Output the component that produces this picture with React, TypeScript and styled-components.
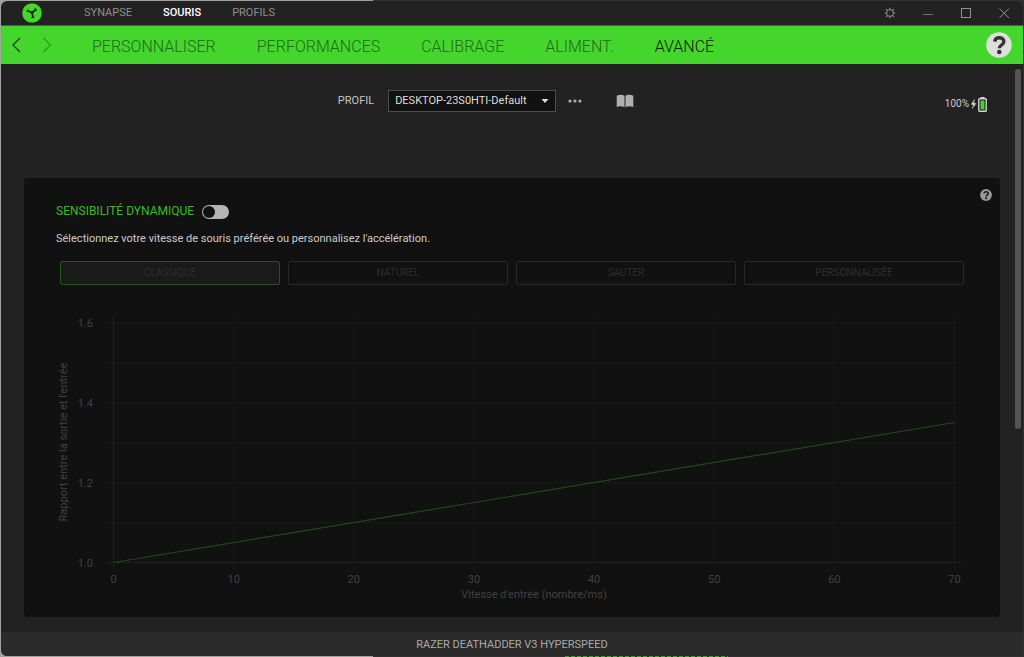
import React, { useState } from "react";
import styled, { createGlobalStyle } from "styled-components";

const GREEN = "#44d62c";

const GlobalStyle = createGlobalStyle`
  * { box-sizing: border-box; }
  body {
    margin: 0;
    background: #222;
    color: #ccc;
    font-family: Roboto, "Liberation Sans", sans-serif;
    font-size: 12px;
    line-height: 16px;
  }
  button, select, input { font: inherit; margin: 0; }
`;

/* The desktop shows through as a thin rim around the window. */
const Desktop = styled.div`
  display: flex;
  min-height: 100vh;
  padding: 1px;
  background:
    repeating-linear-gradient(90deg, #3f9a30 0 4px, #1d3a18 4px 6px) 565px 100% / 163px 1px no-repeat,
    linear-gradient(90deg, #a0a3a0 373px, #303030 373px);
`;

const Window = styled.div`
  display: flex;
  flex-direction: column;
  flex: 1;
  overflow: hidden;
  border-radius: 6px;
  background: #222;
`;

const TitleBar = styled.header`
  display: flex;
  align-items: center;
  height: 25px;
  padding: 0 13px 0 21px;
  border-bottom: 1px solid #35702b;
`;

const Logo = styled.svg`
  width: 20px;
  height: 20px;
  margin-right: 42px;
`;

const AppTabs = styled.nav`
  display: flex;
  flex: 1;
  gap: 31px;
`;

const AppTab = styled.a<{ $active?: boolean }>`
  color: ${(p) => (p.$active ? "#fff" : "#8e8e8e")};
  font-size: 11px;
  font-weight: ${(p) => (p.$active ? 500 : 400)};
  line-height: 18px;
  text-decoration: none;
`;

const IconButton = styled.button`
  display: flex;
  align-items: center;
  justify-content: center;
  padding: 0;
  border: 0;
  background: none;
  color: inherit;
  cursor: pointer;
  &:disabled { opacity: 0.4; }
`;

const WindowControls = styled.div`
  display: flex;
  gap: 26px;
  color: #929292;
`;

const SectionBar = styled.nav`
  display: flex;
  align-items: center;
  height: 38px;
  padding: 0 11px 0 9px;
  background: ${GREEN};
  color: #143d0e;
`;

const HistoryButtons = styled.div`
  display: flex;
  gap: 19px;
  margin-right: 39px;
`;

const Sections = styled.div`
  display: flex;
  flex: 1;
  gap: 41px;
  padding-top: 3px;
`;

const SectionLink = styled.a<{ $active?: boolean }>`
  color: ${(p) => (p.$active ? "#0c1a08" : "#226a18")};
  font-size: 16px;
  font-weight: 300;
  line-height: 20px;
  text-decoration: none;
`;

const Body = styled.div`
  display: flex;
  flex: 1;
  gap: 15px;
  padding: 0 1px 0 23px;
`;

const Content = styled.main`
  flex: 1;
  min-width: 0;
  padding-bottom: 15px;
`;

const ProfileBar = styled.div`
  display: grid;
  grid-template-columns: 1fr auto 1fr;
  align-items: center;
  height: 114px;
  padding: 0 13px 40px;
`;

const ProfilePicker = styled.div`
  grid-column: 2;
  display: flex;
  align-items: center;
  margin-right: 52px;
  color: #b0b0b0;
`;

const ProfileLabel = styled.label`
  margin-right: 14px;
  color: #c4c4c4;
  font-size: 11px;
`;

const SelectFrame = styled.div`
  display: grid;
  align-items: center;
  width: 168px;
  height: 22px;
  margin-right: 12px;
  & > * { grid-area: 1 / 1; }
  & > svg { justify-self: end; margin-right: 7px; pointer-events: none; }
`;

const ProfileSelect = styled.select`
  width: 100%;
  height: 22px;
  padding: 0 20px 0 6px;
  border: 1px solid #4c4c4c;
  border-radius: 0;
  background: #111;
  color: #ddd;
  font-size: 11px;
  appearance: none;
`;

const MenuGap = styled.div`
  width: 34px;
`;

const Battery = styled.div`
  display: flex;
  grid-column: 3;
  align-items: center;
  justify-content: flex-end;
  gap: 1px;
  padding-top: 6px;
  color: #ccc;
  font-size: 10px;
`;

const Card = styled.section`
  padding: 11px 32px;
  border-radius: 4px;
  background: #111;
`;

const CardHeader = styled.div`
  display: flex;
  align-items: flex-start;
  justify-content: space-between;
  height: 42px;
  margin-right: -24px;
`;

const CardTitle = styled.label`
  display: flex;
  align-items: center;
  gap: 8px;
  padding-top: 14px;
  color: #3cb928;
  line-height: 17px;
`;

const Toggle = styled.input`
  display: block;
  width: 27px;
  height: 14px;
  border-radius: 7px;
  background: #b4b4b4;
  appearance: none;
  cursor: pointer;
  &::before {
    content: "";
    display: block;
    width: 12px;
    height: 12px;
    margin: 1px;
    border-radius: 50%;
    background: #111;
  }
  &:checked { background: ${GREEN}; }
  &:checked::before { margin-left: 14px; }
`;

const Description = styled.p`
  margin: 0 0 14px;
  color: #ccc;
  font-size: 11px;
`;

const Modes = styled.div`
  display: grid;
  grid-template-columns: repeat(4, 1fr);
  gap: 8px;
  margin: 0 4px 21px;
`;

const Mode = styled.button<{ $selected?: boolean }>`
  height: 24px;
  padding: 0;
  border: 1px solid ${(p) => (p.$selected ? "#21581a" : "#292929")};
  border-radius: 2px;
  background: ${(p) => (p.$selected ? "#1a1a1a" : "#111")};
  color: #2e2e2e;
  font-size: 10px;
`;

const Chart = styled.svg`
  display: block;
  width: 100%;
  height: auto;
  fill: #404040;
  font-size: 11px;
`;

const ScrollTrack = styled.div`
  width: 7px;
  padding-top: 5px;
`;

const ScrollThumb = styled.div`
  width: 6px;
  height: 64%;
  border-radius: 3px;
  background: #555;
`;

const Footer = styled.footer`
  height: 24px;
  background: #2b2b2b;
  color: #a8a8a8;
  font-size: 11px;
  line-height: 25px;
  text-align: center;
`;

const sections = ["PERSONNALISER", "PERFORMANCES", "CALIBRAGE", "ALIMENT.", "AVANCÉ"];
const modes = ["CLASSIQUE", "NATUREL", "SAUTER", "PERSONNALISÉE"];
const speeds = [0, 10, 20, 30, 40, 50, 60, 70];

const plotX = (speed: number) => 57.5 + (speed * 841) / 70;
const plotY = (ratio: number) => 256.5 - (ratio - 1) * 400;

function Chevron({ flip = false }: { flip?: boolean }) {
  return (
    <svg width="12" height="16" viewBox="0 0 12 16" fill="none" stroke="currentColor" strokeWidth="1.2">
      <path d={flip ? "M2.5 1 9.500 8l-7 7" : "M10 1 3 8l7 7"} />
    </svg>
  );
}

function Help({ size, fill, mark }: { size: number; fill: string; mark: string }) {
  return (
    <svg width={size} height={size} viewBox="0 0 26 26" fill="none">
      <circle cx="13" cy="13" r="12.8" fill={fill} />
      <path d="M8.6 9.6c.5-2.6 2.2-3.8 4.6-3.8 2.7 0 4.7 1.4 4.7 3.8 0 3.3-4.600 3.500-4.600 6.700" stroke={mark} strokeWidth="3.4" />
      <circle cx="13.3" cy="20" r="2.3" fill={mark} />
    </svg>
  );
}

function SensitivityChart() {
  return (
    <Chart viewBox="0 0 912 300" role="img" aria-label="Rapport entre la sortie et l'entrée">
      <g stroke="#191919">
        {[1.1, 1.2, 1.3, 1.4, 1.5, 1.6].map((r) => (
          <line key={r} x1="51" x2="906" y1={plotY(r)} y2={plotY(r)} />
        ))}
        {speeds.slice(1).map((s) => (
          <line key={s} x1={plotX(s)} x2={plotX(s)} y1="9" y2="264" />
        ))}
      </g>
      <g stroke="#162a12">
        <line x1={plotX(0)} x2={plotX(0)} y1="9" y2="264" />
        <line x1="51" x2="906" y1={plotY(1)} y2={plotY(1)} />
      </g>
      <path
        d={`M${plotX(0)} ${plotY(1)}L${plotX(70)} ${plotY(1.35)}`}
        stroke="#1e4a17"
        strokeWidth="1.2"
      />
      {[1, 1.2, 1.4, 1.6].map((r) => (
        <text key={r} x="37" y={plotY(r) + 4} textAnchor="end">{r.toFixed(1)}</text>
      ))}
      {speeds.map((s) => (
        <text key={s} x={plotX(s)} y="277" textAnchor="middle">{s}</text>
      ))}
      <text x="478" y="292" textAnchor="middle">Vitesse d'entrée (nombre/ms)</text>
      <text transform="translate(11 136) rotate(-90)" textAnchor="middle">
        Rapport entre la sortie et l'entrée
      </text>
    </Chart>
  );
}

export default function App() {
  const [dynamic, setDynamic] = useState(false);
  return (
    <>
      <GlobalStyle />
      <Desktop>
        <Window>
          <TitleBar>
            <Logo viewBox="0 0 20 20">
              <circle cx="10" cy="10" r="9.8" fill={GREEN} />
              <g fill="none" stroke="#16300f" strokeLinecap="round">
                <path d="M10 9.8 6 8M10 9.8l3.600-3M10 9.800l1 4" strokeWidth="1.8" />
                <path d="M5 8.600l.8-1.800M13 5.400l1.400 1.800M9.800 14.600l2-.5" strokeWidth="1.1" />
              </g>
              <circle cx="10" cy="9.600" r="1.500" fill="#16300f" />
            </Logo>
            <AppTabs>
              <AppTab href="#synapse">SYNAPSE</AppTab>
              <AppTab href="#souris" $active>SOURIS</AppTab>
              <AppTab href="#profils">PROFILS</AppTab>
            </AppTabs>
            <WindowControls>
              <IconButton aria-label="Paramètres">
                <svg width="12" height="12" viewBox="0 0 12 12" fill="none" stroke="currentColor">
                  <circle cx="6" cy="6" r="3.4" strokeWidth="1" />
                  <path d="M6 .8v1.600M6 9.600v1.600M.8 6h1.600M9.600 6h1.600M2.100 2.100l1.200 1.200M8.700 8.700l1.200 1.200M9.900 2.100 8.700 3.300M3.300 8.700 2.100 9.900" strokeWidth="1.2" />
                </svg>
              </IconButton>
              <IconButton aria-label="Réduire">
                <svg width="12" height="12" viewBox="0 0 12 12" stroke="#6e6e6e"><path d="M1 7.5h10" /></svg>
              </IconButton>
              <IconButton aria-label="Agrandir">
                <svg width="12" height="12" viewBox="0 0 12 12" fill="none" stroke="currentColor"><rect x="1.5" y="1.5" width="9" height="9" /></svg>
              </IconButton>
              <IconButton aria-label="Fermer">
                <svg width="12" height="12" viewBox="0 0 12 12" stroke="currentColor"><path d="M1.500 1.500l9.500 9.500M11 1.500 1.500 11" /></svg>
              </IconButton>
            </WindowControls>
          </TitleBar>

          <SectionBar>
            <HistoryButtons>
              <IconButton aria-label="Précédent"><Chevron /></IconButton>
              <IconButton aria-label="Suivant" disabled><Chevron flip /></IconButton>
            </HistoryButtons>
            <Sections>
              {sections.map((s) => (
                <SectionLink key={s} href={"#" + s.toLowerCase()} $active={s === "AVANCÉ"}>{s}</SectionLink>
              ))}
            </Sections>
            <IconButton aria-label="Aide"><Help size={26} fill="#dedede" mark="#333" /></IconButton>
          </SectionBar>

          <Body>
            <Content>
              <ProfileBar>
                <ProfilePicker>
                  <ProfileLabel htmlFor="profile">PROFIL</ProfileLabel>
                  <SelectFrame>
                    <ProfileSelect id="profile"><option>DESKTOP-23S0HTI-Default</option></ProfileSelect>
                    <svg width="8" height="4" viewBox="0 0 8 4" fill="#ddd"><path d="M.5 0h7L4 4z" /></svg>
                  </SelectFrame>
                  <IconButton aria-label="Plus d'options">
                    <svg width="14" height="4" viewBox="0 0 14 4" fill="currentColor">
                      <circle cx="2" cy="2" r="1.6" /><circle cx="7" cy="2" r="1.6" /><circle cx="12" cy="2" r="1.6" />
                    </svg>
                  </IconButton>
                  <MenuGap />
                  <IconButton aria-label="Guide">
                    <svg width="18" height="14" viewBox="0 0 18 14" fill="currentColor">
                      <path d="M.7 1.7C3.2.4 6.3.4 8.5 1.800v11.400C6.300 11.900 3.200 11.900.7 13.100zM17.300 1.700C14.800.4 11.700.4 9.500 1.800v11.400c2.200-1.300 5.300-1.300 7.800-.1z" />
                    </svg>
                  </IconButton>
                </ProfilePicker>
                <Battery>
                  100%
                  <svg width="7" height="12" viewBox="0 0 7 12" fill="#ccc"><path d="M5 .5 .8 6.600l2.400.2-1.500 4.700L6.400 5.200l-2.500-.3z" /></svg>
                  <svg width="9" height="15" viewBox="0 0 9 15">
                    <path d="M2.500 0h4v1.500h-4z" fill="#d6d6d6" />
                    <rect x=".8" y="1.800" width="7.400" height="12.400" rx=".8" fill="#151515" stroke="#d6d6d6" strokeWidth="1.400" />
                    <rect x="2.500" y="3.500" width="4" height="9" fill={GREEN} />
                  </svg>
                </Battery>
              </ProfileBar>

              <Card>
                <CardHeader>
                  <CardTitle>
                    SENSIBILITÉ DYNAMIQUE
                    <Toggle type="checkbox" checked={dynamic} onChange={(e) => setDynamic(e.target.checked)} />
                  </CardTitle>
                  <IconButton aria-label="Aide sur la sensibilité"><Help size={12} fill="#999" mark="#1a1a1a" /></IconButton>
                </CardHeader>
                <Description>Sélectionnez votre vitesse de souris préférée ou personnalisez l'accélération.</Description>
                <Modes>
                  {modes.map((m, i) => (
                    <Mode key={m} $selected={i === 0} disabled={!dynamic}>{m}</Mode>
                  ))}
                </Modes>
                <SensitivityChart />
              </Card>
            </Content>
            <ScrollTrack aria-hidden="true"><ScrollThumb /></ScrollTrack>
          </Body>

          <Footer>RAZER DEATHADDER V3 HYPERSPEED</Footer>
        </Window>
      </Desktop>
    </>
  );
}
